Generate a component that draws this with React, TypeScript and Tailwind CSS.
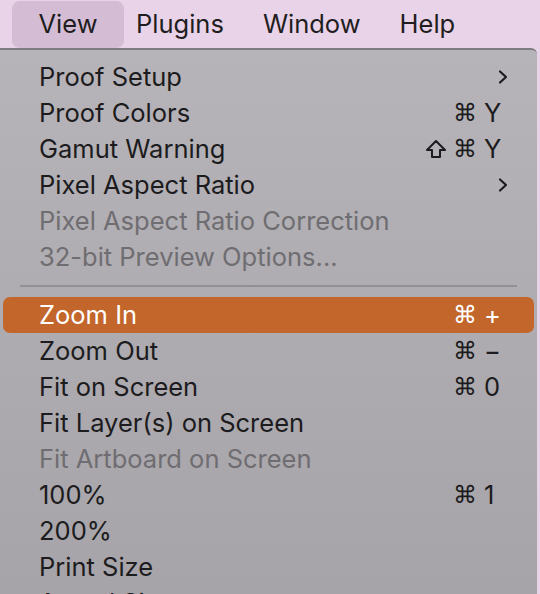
import React from 'react';

type Item = {
  label: string;
  disabled?: boolean;
  active?: boolean;
  mods?: ('cmd' | 'shift')[];
  keyLabel?: string;
  submenu?: boolean;
};

const Chevron = () => (
  <svg width="10" height="16" viewBox="0 0 10 16" fill="none">
    <path d="M2 2.5 L8 8 L2 13.5" stroke="currentColor" strokeWidth="2.2" strokeLinecap="round" strokeLinejoin="round" />
  </svg>
);

const ShiftIcon = () => (
  <svg width="22" height="20" viewBox="0 0 22 20" fill="none">
    <path d="M11 2 L20 11 L15 11 L15 18 L7 18 L7 11 L2 11 Z" stroke="currentColor" strokeWidth="2" strokeLinejoin="round" />
  </svg>
);

const items: Item[] = [
  { label: 'Proof Setup', submenu: true },
  { label: 'Proof Colors', mods: ['cmd'], keyLabel: 'Y' },
  { label: 'Gamut Warning', mods: ['shift', 'cmd'], keyLabel: 'Y' },
  { label: 'Pixel Aspect Ratio', submenu: true },
  { label: 'Pixel Aspect Ratio Correction', disabled: true },
  { label: '32-bit Preview Options...', disabled: true },
];

const items2: Item[] = [
  { label: 'Zoom In', active: true, mods: ['cmd'], keyLabel: '+' },
  { label: 'Zoom Out', mods: ['cmd'], keyLabel: '−' },
  { label: 'Fit on Screen', mods: ['cmd'], keyLabel: '0' },
  { label: 'Fit Layer(s) on Screen' },
  { label: 'Fit Artboard on Screen', disabled: true },
  { label: '100%', mods: ['cmd'], keyLabel: '1' },
  { label: '200%' },
  { label: 'Print Size' },
  { label: 'Actual Size' },
];

const Row = ({ item }: { item: Item }) => {
  const color = item.active ? 'text-white bg-[#c2662c]' : item.disabled ? 'text-[#6f6d71]' : 'text-[#1c1b1d]';
  return (
    <div className={`flex items-center h-9 mx-[3px] pl-9 rounded-[7px] shrink-0 ${color}`}>
      <span className="flex-1 whitespace-nowrap">{item.label}</span>
      <div className="flex items-center justify-end gap-[6px] w-[80px] mr-[7px]">
        {item.mods?.map((m) =>
          m === 'cmd' ? (
            <span key={m} className="text-[24px] font-['DejaVu_Sans'] font-light leading-none">⌘</span>
          ) : (
            <ShiftIcon key={m} />
          )
        )}
      </div>
      <div className="w-[50px] flex items-center">
        {item.keyLabel && <span>{item.keyLabel}</span>}
        {item.submenu && (
          <span className="ml-[14px] text-[#1c1b1d]">
            <Chevron />
          </span>
        )}
      </div>
    </div>
  );
};

export default function App() {
  return (
    <div className="w-[540px] h-[594px] overflow-hidden bg-[#e8d3e8] font-['Inter',sans-serif] text-[25.5px]">
      <div className="flex items-center h-[48px] text-[#1f1d20]">
        <div className="ml-3 h-[47px] w-[112px] rounded-[8px] bg-[#d4bcd5] flex items-center justify-center">View</div>
        <div className="ml-[12px]">Plugins</div>
        <div className="ml-[39px]">Window</div>
        <div className="ml-[39px]">Help</div>
      </div>
      <div className="h-[546px] border-t-2 border-[#7d7b7f] rounded-tr-[6px] mr-[3px] bg-gradient-to-b from-[#b6b4b8] to-[#a6a4a8] flex flex-col pt-[9px] overflow-hidden">
        {items.map((it) => (
          <Row key={it.label} item={it} />
        ))}
        <div className="h-[22px] flex items-center px-5 shrink-0">
          <div className="h-[2px] w-full bg-[#929094]" />
        </div>
        {items2.map((it) => (
          <Row key={it.label} item={it} />
        ))}
      </div>
    </div>
  );
}
